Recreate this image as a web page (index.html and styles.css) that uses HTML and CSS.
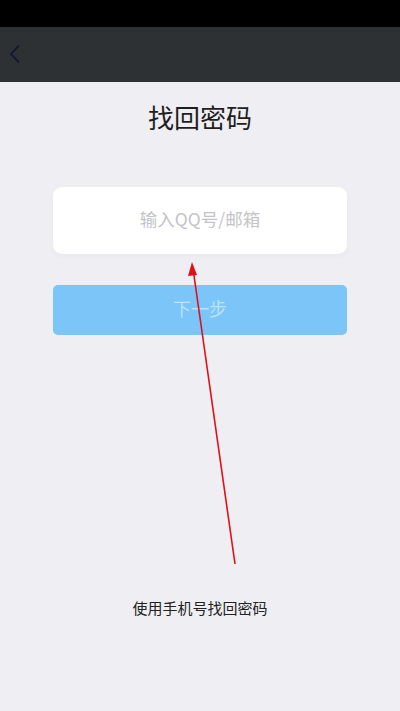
FILE: index.html
```html
<!DOCTYPE html>
<html lang="zh">
<head>
<meta charset="utf-8">
<link rel="stylesheet" href="styles.css">
</head>
<body>
<div class="statusbar"></div>
<div class="navbar">
  <svg class="back" width="12" height="20" viewBox="0 0 12 20"><path d="M10 1.5 L2 10 L10 18.5" fill="none" stroke="#141a2e" stroke-width="2"/></svg>
</div>
<main class="content">
  <h1 class="title">找回密码</h1>
  <div class="input">输入QQ号/邮箱</div>
  <div class="btn">下一步</div>
  <div class="spacer"></div>
  <div class="alt">使用手机号找回密码</div>
</main>
<svg class="arrow" width="400" height="711" viewBox="0 0 400 711">
  <line x1="235" y1="564" x2="193.5" y2="272" stroke="#e0101a" stroke-width="1.6"/>
  <polygon points="192,262 188,276 197,275" fill="#e0101a"/>
</svg>
</body>
</html>
```

FILE: styles.css
```css
html, body {
  margin: 0;
  padding: 0;
}
body {
  width: 400px;
  height: 711px;
  background: #efeff3;
  font-family: "Noto Sans CJK SC", "Noto Sans", sans-serif;
  position: relative;
  overflow: hidden;
  display: flex;
  flex-direction: column;
}
.statusbar {
  height: 27px;
  background: #000;
}
.navbar {
  height: 55px;
  background: #2e3133;
  display: flex;
  align-items: center;
  padding-left: 9px;
}
.back {
  display: block;
  margin-top: -1px;
}
.content {
  flex: 1;
  display: flex;
  flex-direction: column;
  align-items: center;
}
.title {
  margin: 17px 0 0;
  font-size: 26px;
  line-height: 36px;
  font-weight: 400;
  color: #1e1e1e;
}
.input {
  margin-top: 52px;
  width: 294px;
  height: 67px;
  box-sizing: border-box;
  padding-bottom: 4px;
  background: #fff;
  border-radius: 9px;
  display: flex;
  align-items: center;
  justify-content: center;
  font-size: 17.5px;
  color: #c4c4c8;
  box-shadow: 0 2px 6px rgba(0,0,0,0.03);
}
.btn {
  margin-top: 31px;
  width: 294px;
  height: 50px;
  box-sizing: border-box;
  padding-bottom: 5px;
  background: #7bc5f9;
  border-radius: 5px;
  display: flex;
  align-items: center;
  justify-content: center;
  font-size: 18px;
  color: rgba(255,255,255,0.5);
}
.spacer {
  height: 262px;
}
.alt {
  font-size: 15px;
  line-height: 22px;
  color: #222;
}
.arrow {
  position: absolute;
  left: 0;
  top: 0;
  pointer-events: none;
}
```
